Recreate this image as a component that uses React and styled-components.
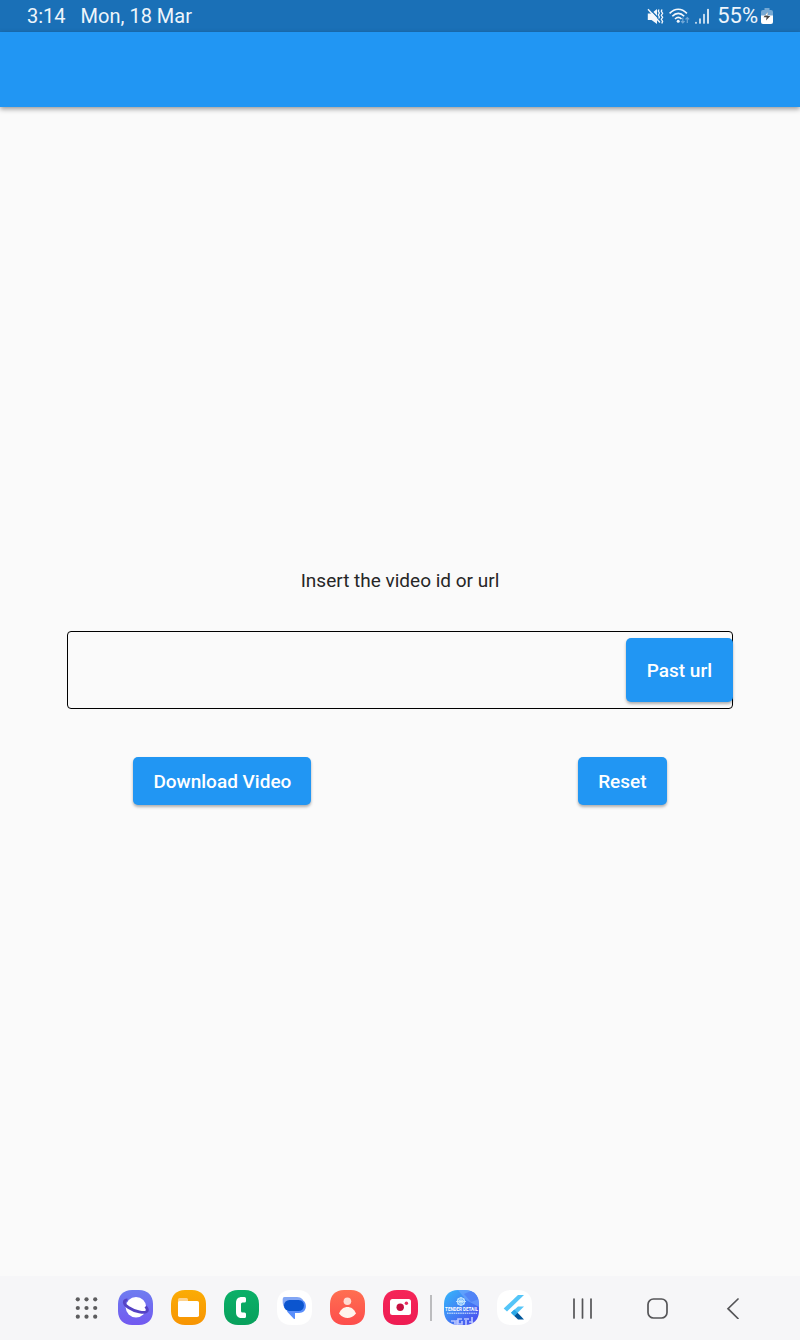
import React, { useState } from "react";
import styled, { createGlobalStyle } from "styled-components";

const GlobalStyle = createGlobalStyle`
  *, *::before, *::after { box-sizing: border-box; }
  body {
    margin: 0;
    background: #fafafa;
    font-family: Roboto, "Noto Sans", sans-serif;
    color: #262626;
  }
`;

const Screen = styled.div`
  min-height: 100vh;
  display: flex;
  flex-direction: column;
`;

const StatusBar = styled.div`
  height: 32px;
  padding: 0 27px;
  display: flex;
  align-items: center;
  justify-content: space-between;
  background: #1a70b7;
  color: #eef5fb;
  font-size: 20px;
  line-height: 32px;
`;

const StatusGroup = styled.div`
  display: flex;
  align-items: center;
  gap: ${(p) => p.$gap}px;
`;

const Battery = styled.span`
  font-size: 22px;
`;

const AppBar = styled.header`
  height: 75px;
  background: #2196f3;
  box-shadow: 0 2px 5px rgba(0, 0, 0, 0.4);
`;

const Main = styled.main`
  flex: 1;
  display: flex;
  flex-direction: column;
  justify-content: center;
  padding-bottom: 9px;
`;

const Prompt = styled.label`
  align-self: center;
  margin-bottom: 38px;
  font-size: 19px;
  line-height: 24px;
`;

const Field = styled.div`
  display: flex;
  align-items: center;
  height: 78px;
  margin: 0 67px 48px;
  border: 1px solid #000;
  border-radius: 4px;
`;

const UrlInput = styled.input`
  flex: 1;
  min-width: 0;
  height: 100%;
  padding: 0 16px;
  border: 0;
  outline: 0;
  background: transparent;
  font: 21px Roboto, sans-serif;
`;

const RaisedButton = styled.button`
  height: ${(p) => (p.$tall ? 64 : 48)}px;
  margin: 0 ${(p) => (p.$tall ? -1 : 0)}px 0 0;
  padding: 0 ${(p) => (p.$tall ? 21 : 20)}px;
  border: 0;
  border-radius: 5px;
  background: #2196f3;
  color: #fff;
  font: 500 19px Roboto, sans-serif;
  white-space: nowrap;
  box-shadow: 0 2px 3px rgba(0, 0, 0, 0.3);
  cursor: pointer;
`;

const Actions = styled.div`
  display: flex;
  justify-content: space-around;
`;

const Taskbar = styled.nav`
  height: 64px;
  padding: 0 30px 1px 75px;
  display: flex;
  align-items: center;
  justify-content: space-between;
  background: #f6f6f8;
`;

const Dock = styled.div`
  display: flex;
  align-items: center;
  gap: 18px;
`;

const RecentDock = styled(Dock)`
  margin-left: -6px;
  padding-left: 12px;
  border-left: 2px solid #bcbcbe;
  height: 26px;
`;

const DockButton = styled.button`
  display: flex;
  padding: 0;
  border: 0;
  background: none;
  cursor: pointer;
`;

const SystemKeys = styled.div`
  display: flex;
`;

const SystemKey = styled(DockButton)`
  width: 75px;
  height: 48px;
  align-items: center;
  justify-content: center;
`;

const SQUIRCLE = "M14 0H21C29.500 0 35 5.500 35 14V21C35 29.500 29.500 35 21 35H14C5.500 35 0 29.500 0 21V14C0 5.500 5.500 0 14 0Z";

function Tile({ id, label, from, to, diagonal, children }) {
  return (
    <DockButton type="button" aria-label={label}>
      <svg width="35" height="35" viewBox="0 0 35 35">
        <defs>
          <linearGradient id={id} x1="0" y1="0" x2={diagonal ? "1" : "0"} y2="1">
            <stop offset="0" stopColor={from} />
            <stop offset="1" stopColor={to} />
          </linearGradient>
          <clipPath id={id + "-clip"}>
            <path d={SQUIRCLE} />
          </clipPath>
        </defs>
        <path d={SQUIRCLE} fill={`url(#${id})`} />
        <g clipPath={`url(#${id}-clip)`}>{children}</g>
      </svg>
    </DockButton>
  );
}

function MuteIcon() {
  return (
    <svg width="17" height="17" viewBox="0 0 17 17" fill="#f2f7fc">
      <path d="M.8 5.500H4.500L10 1V16L4.500 12H.8Z" />
      <path d="M2.300 .5 14.500 13.500" stroke="#1a70b7" strokeWidth="1.300" />
      <path d="M1 1.300 13 14.500" stroke="#f2f7fc" strokeWidth="1.400" />
      <path d="M12 1.500 11.300 3 12.400 5 11.300 7 12.400 9 11.700 10.500M15 1.500 14.300 3.300 15.600 5.300 14.300 7.300 15.600 9.300 14.300 11.300 15.600 13.300 14.800 15.500" fill="none" stroke="#f2f7fc" strokeWidth="1.300" />
    </svg>
  );
}

function WifiIcon() {
  return (
    <svg width="21" height="17" viewBox="0 0 21 17" fill="none" stroke="#f2f7fc" strokeWidth="1.600">
      <path d="M.6 5.400C6-.2 12.500-.2 17.900 5.400M3.300 8.300C7 4.400 11.500 4.400 15.200 8.300M6 11C8.200 8.900 10.300 8.900 12.500 11" />
      <circle cx="9.200" cy="13.300" r="1.500" fill="#f2f7fc" stroke="none" />
      <path d="M13.800 9.500V15M12 13.200 13.800 15 15.600 13.200M18.300 15V9.500M16.500 11.300 18.300 9.500 20.100 11.300" stroke="#6fa6d6" strokeWidth="1.200" />
    </svg>
  );
}

function SignalIcon() {
  return (
    <svg width="15" height="17" viewBox="0 0 15 17" stroke="#f2f7fc" strokeWidth="1.700" strokeLinecap="round">
      <path d="M1 14.500V15M5 11V15M9 6.500V15" opacity=".9" />
      <path d="M13 1.500V15" />
    </svg>
  );
}

function BatteryIcon() {
  return (
    <svg width="12" height="17" viewBox="0 0 12 17">
      <path d="M3.500 0H8.500V2H10Q12 2 12 4V8H0V4Q0 2 2 2H3.500Z" fill="#76a9d4" />
      <path d="M0 7.500H12V14Q12 16 10 16H2Q0 16 0 14Z" fill="#fff" />
      <path d="M6.800 4 2.500 9.300H5.600L5 12.500 9.300 8H6.500Z" fill="#444" />
      <path d="M6.800 4 3.800 7.500H6.600Z" fill="#fff" />
    </svg>
  );
}

function DotsIcon() {
  return (
    <svg width="25" height="25" viewBox="0 0 25 25" fill="#5c5c5e">
      {[4.300, 13, 21.700].map((y) =>
        [2.800, 11.500, 20.200].map((x) => <circle key={x + "-" + y} cx={x} cy={y} r="2.100" />)
      )}
    </svg>
  );
}

export default function App() {
  const [url, setUrl] = useState("");

  const pasteUrl = async () => {
    try {
      setUrl(await navigator.clipboard.readText());
    } catch {
      setUrl("");
    }
  };

  return (
    <Screen>
      <GlobalStyle />
      <StatusBar>
        <StatusGroup $gap={15}>
          <span>3:14</span>
          <span>Mon, 18 Mar</span>
        </StatusGroup>
        <StatusGroup $gap={7}>
          <StatusGroup $gap={5}>
            <MuteIcon />
            <WifiIcon />
            <SignalIcon />
          </StatusGroup>
          <StatusGroup $gap={3}>
            <Battery>55%</Battery>
            <BatteryIcon />
          </StatusGroup>
        </StatusGroup>
      </StatusBar>
      <AppBar />

      <Main>
        <Prompt htmlFor="video-url">Insert the video id or url</Prompt>
        <Field>
          <UrlInput id="video-url" type="text" value={url} onChange={(e) => setUrl(e.target.value)} />
          <RaisedButton type="button" $tall onClick={pasteUrl}>Past url</RaisedButton>
        </Field>
        <Actions>
          <RaisedButton type="button">Download Video</RaisedButton>
          <RaisedButton type="button" onClick={() => setUrl("")}>Reset</RaisedButton>
        </Actions>
      </Main>

      <Taskbar>
        <Dock>
          <DockButton type="button" aria-label="All apps"><DotsIcon /></DockButton>
          <Tile id="internet" label="Internet" from="#6f7df0" to="#7259f0">
            <circle cx="18" cy="17.200" r="10.300" fill="#fff" />
            <path d="M9.500 9.800C5 10 5 14 10.500 17.500C16.500 21.500 27 24 29 21.200C29.800 20 29 18 27.500 16.500" fill="none" stroke="#5543c4" strokeWidth="2.800" />
          </Tile>
          <Tile id="files" label="My Files" from="#fbac05" to="#f79403">
            <path d="M7 14V9.500Q7 8 8.500 8H15.500Q17 8 17 9.500V14Z" fill="#fdd28c" />
            <rect x="7" y="11" width="21" height="16" rx="1.800" fill="#fff" />
          </Tile>
          <Tile id="phone" label="Phone" from="#0bb068" to="#08a05c">
            <path d="M20.500 7H18C14 7 12 9 12 13V22C12 26 14 28 18 28H20.500Q22 28 22 26.500V24Q22 22.500 20.500 22.500H18.500Q17 22.500 17 21V14Q17 12.500 18.500 12.500H20.500Q22 12.500 22 11V8.500Q22 7 20.500 7Z" fill="#fff" />
          </Tile>
          <Tile id="messages" label="Messages" from="#fff" to="#fff">
            <path d="M7.500 7H20C24.500 7 27 10 27 14L12 20.500C8 20 5.700 16 5.700 12V9Q5.700 7 7.500 7Z" fill="#82a6f4" />
            <path d="M22 10H24C27.500 10.500 28.900 13 28.900 16.300C28.900 20.500 26 23 22 23H18V28.500Q17.500 29.500 16.800 28.800L10 21.500Z" fill="#5b8ffb" />
            <rect x="7" y="10" width="20" height="11" rx="5.500" fill="#0b55cf" />
          </Tile>
          <Tile id="contacts" label="Contacts" from="#ff6f51" to="#fd4d4c">
            <circle cx="17.400" cy="11.300" r="3.800" fill="#ffdcd3" />
            <path d="M9 23.500C11 19 14 17 17.500 17S24 19 26 23.500C23 27 20.500 28 17.500 28S12 27 9 23.500Z" fill="#fff5ed" />
          </Tile>
          <Tile id="capture" label="Screen recorder" from="#f52558" to="#ee1c53">
            <rect x="7" y="9" width="21" height="16" rx="2.500" fill="#fff" />
            <circle cx="17.200" cy="17.300" r="3.700" fill="#c60f40" />
            <circle cx="23.400" cy="13.300" r="1.700" fill="#e62e60" />
          </Tile>
          <RecentDock>
            <Tile id="tender" label="Tender Detail" from="#35b9fb" to="#4e46ed" diagonal>
              <path d="M14 0H35V17L22 10Z" fill="#75a8ff" opacity=".6" />
              <path d="M20 4 29 0 35 9 27 12Z" fill="#4b7bf3" opacity=".7" />
              <circle cx="17" cy="11.500" r="4" fill="#8fd0ff" opacity=".6" />
              <g fill="none" stroke="#d4efff" strokeWidth=".8">
                <circle cx="17" cy="11.500" r="3.800" />
                <path d="M12 11.500H22M17 7V16M13.500 9 20.500 14M20.500 9 13.500 14" />
              </g>
              <text x="17.500" y="21.300" textAnchor="middle" fill="#fff" fontFamily="Roboto, sans-serif" fontWeight="700" fontSize="4.500">TENDER DETAIL</text>
              <path d="M3 23.200H33" stroke="#ddecff" strokeWidth="1" strokeDasharray="1.600 .6" />
              <path d="M7 31H11V35M13 30V35M18 29H14V34H18V31M20 29H25M22 30V35M28 27V35M25 32H29" fill="none" stroke="#b9c5ff" strokeWidth="1.700" />
            </Tile>
            <Tile id="flutter" label="Flutter" from="#fff" to="#fff">
              <path d="M21 5H27L10 21.500 6.700 18.500Z" fill="#54c5f8" />
              <path d="M21 16.500H27L17.300 26 14 22.800Z" fill="#54c5f8" />
              <path d="M14 22.800 17.300 19.500 20.600 22.800 17.300 26Z" fill="#29a8e8" />
              <path d="M17.300 26 20.600 22.800 27 29.500H21Z" fill="#01579b" />
            </Tile>
          </RecentDock>
        </Dock>
        <SystemKeys>
          <SystemKey type="button" aria-label="Recent apps">
            <svg width="22" height="22" viewBox="0 0 22 22" stroke="#555558" strokeWidth="1.700" strokeLinecap="round">
              <path d="M2 2V21M10.500 2V21M19 2V21" />
            </svg>
          </SystemKey>
          <SystemKey type="button" aria-label="Home">
            <svg width="22" height="22" viewBox="0 0 22 22" fill="none" stroke="#555558" strokeWidth="1.700">
              <rect x="1" y="2" width="19" height="19" rx="5.500" />
            </svg>
          </SystemKey>
          <SystemKey type="button" aria-label="Back">
            <svg width="14" height="22" viewBox="0 0 14 22" fill="none" stroke="#555558" strokeWidth="1.700" strokeLinecap="round">
              <path d="M12 2 2 11.700 12 21.500" />
            </svg>
          </SystemKey>
        </SystemKeys>
      </Taskbar>
    </Screen>
  );
}
